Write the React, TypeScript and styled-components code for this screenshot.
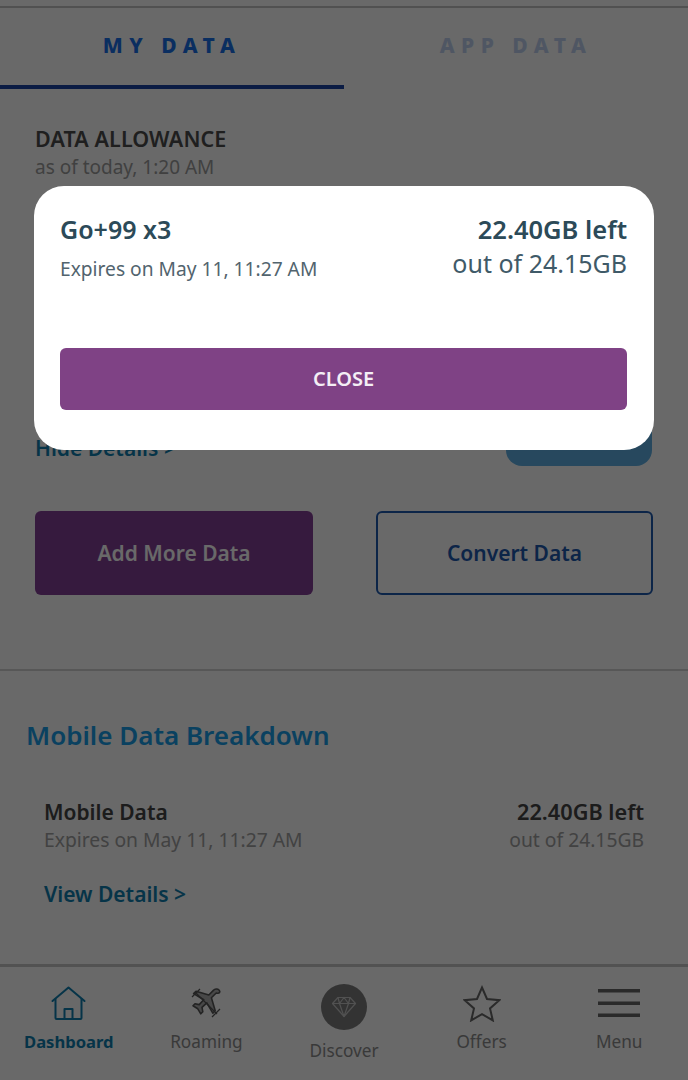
import React from 'react';
import styled, { createGlobalStyle } from 'styled-components';

const GlobalStyle = createGlobalStyle`
  html, body { margin: 0; padding: 0; background: #fff; }
  * { box-sizing: border-box; }
`;

const Page = styled.div`
  position: relative;
  width: 688px;
  height: 1080px;
  overflow: hidden;
  background: #fefefe;
  font-family: "Noto Sans", "Open Sans", sans-serif;
  display: flex;
  flex-direction: column;
`;

const TopLine = styled.div`
  margin-top: 6px;
  height: 2px;
  background: #c4c4c4;
`;

const Tabs = styled.div`
  display: flex;
  height: 81px;
`;

const Tab = styled.div<{ $active?: boolean }>`
  width: 344px;
  display: flex;
  align-items: center;
  justify-content: center;
  padding-bottom: 3px;
  font-size: 21px;
  font-weight: 800;
  letter-spacing: 6.5px;
  color: ${(p) => (p.$active ? '#1a70ea' : '#c0d2f0')};
  border-bottom: 4px solid ${(p) => (p.$active ? '#1b45a5' : 'transparent')};
`;

const Allowance = styled.section`
  padding: 36px 35px 0;
  height: 582px;
  border-bottom: 2px solid #d4d4d4;
  display: flex;
  flex-direction: column;
`;

const AllowanceTitle = styled.div`
  font-size: 21.5px;
  line-height: 28px;
  font-weight: 600;
  letter-spacing: 0.1px;
  color: #4c4c4c;
`;

const AsOf = styled.div`
  font-size: 19px;
  line-height: 28px;
  color: #9c9c9c;
`;

const DetailsRow = styled.div`
  margin-top: 248px;
  height: 37px;
  display: flex;
  justify-content: space-between;
  align-items: flex-end;
`;

const HideLink = styled.div`
  font-size: 21px;
  line-height: 36px;
  font-weight: 600;
  color: #0f7fb0;
`;

const Pill = styled.div`
  width: 146px;
  height: 37px;
  margin-right: 1px;
  border-radius: 0 0 16px 16px;
  background: #5fb0e4;
`;

const ActionRow = styled.div`
  margin-top: 45px;
  display: flex;
  justify-content: space-between;
`;

const Action = styled.div<{ $filled?: boolean }>`
  width: ${(p) => (p.$filled ? '278px' : '277px')};
  height: 84px;
  border-radius: 6px;
  display: flex;
  align-items: center;
  justify-content: center;
  font-size: 21px;
  font-weight: 600;
  background: ${(p) => (p.$filled ? '#833f97' : 'transparent')};
  color: ${(p) => (p.$filled ? '#fff' : '#1f5ab0')};
  border: ${(p) => (p.$filled ? 'none' : '2px solid #1f5ab0')};
`;

const Breakdown = styled.section`
  flex: 1;
  padding: 46px 44px 0 26px;
`;

const BreakdownTitle = styled.h2`
  margin: 0;
  font-size: 26px;
  line-height: 36px;
  font-weight: 600;
  color: #1a9fe8;
`;

const BreakdownRow = styled.div`
  margin-top: 45px;
  padding-left: 18px;
  display: flex;
  justify-content: space-between;
`;

const Stack = styled.div<{ $end?: boolean }>`
  display: flex;
  flex-direction: column;
  align-items: ${(p) => (p.$end ? 'flex-end' : 'flex-start')};
`;

const RowName = styled.div`
  font-size: 21px;
  line-height: 28px;
  font-weight: 600;
  color: #444;
`;

const RowAmount = styled(RowName)`
  font-size: 21.7px;
`;

const RowSub = styled.div`
  font-size: 19.3px;
  line-height: 28px;
  color: #a0a0a0;
`;

const ViewLink = styled.div`
  margin: 26px 0 0 18px;
  font-size: 21px;
  line-height: 28px;
  font-weight: 600;
  color: #0f7fb0;
`;

const Nav = styled.nav`
  height: 116px;
  border-top: 3px solid #c8c8c8;
  display: flex;
`;

const NavItem = styled.div<{ $active?: boolean }>`
  width: 137.6px;
  display: flex;
  flex-direction: column;
  align-items: center;
  padding-top: 13px;
  font-size: ${(p) => (p.$active ? '16.6px' : '17.2px')};
  line-height: 24px;
  font-weight: ${(p) => (p.$active ? 700 : 400)};
  color: ${(p) => (p.$active ? '#0f7fb0' : '#8c8c8c')};
`;

const IconSlot = styled.div<{ $tall?: boolean }>`
  height: ${(p) => (p.$tall ? '53px' : '46px')};
  margin-bottom: ${(p) => (p.$tall ? '6px' : '4px')};
  display: flex;
  align-items: center;
  justify-content: center;
`;

const DiamondBadge = styled.div`
  width: 46px;
  height: 46px;
  border-radius: 50%;
  background: #7c7c7c;
  display: flex;
  align-items: center;
  justify-content: center;
`;

const Scrim = styled.div`
  position: absolute;
  inset: 0;
  background: rgba(0, 0, 0, 0.59);
`;

const Modal = styled.div`
  position: absolute;
  left: 34px;
  top: 186px;
  width: 620px;
  height: 264px;
  padding: 26px 27px 0 26px;
  border-radius: 30px;
  background: #fff;
  display: flex;
  flex-direction: column;
`;

const ModalHead = styled.div`
  display: flex;
  justify-content: space-between;
  height: 136px;
`;

const PlanName = styled.div`
  font-size: 25px;
  line-height: 34px;
  font-weight: 600;
  color: #2c4a58;
`;

const PlanExpires = styled.div`
  margin-top: 9px;
  font-size: 19.2px;
  line-height: 28px;
  color: #52646e;
`;

const AmountLeft = styled.div`
  font-size: 25.5px;
  line-height: 34px;
  font-weight: 600;
  color: #2c4a58;
`;

const AmountTotal = styled.div`
  font-size: 25px;
  line-height: 34px;
  color: #3f5a68;
`;

const CloseButton = styled.button`
  width: 100%;
  height: 62px;
  padding: 0 0 2px;
  border: none;
  border-radius: 6px;
  background: #7f4285;
  color: #f4eef5;
  font: 600 20px "Noto Sans", "Open Sans", sans-serif;
`;

const House = () => (
  <svg width="35" height="34" viewBox="0 0 35 34" fill="none" stroke="#0f7fb0" strokeWidth="2" strokeLinejoin="round" strokeLinecap="round">
    <path d="M1.5 15 17.5 1.5 33.5 15" />
    <path d="M4.5 13v19a1 1 0 0 0 1 1h24a1 1 0 0 0 1-1V13" />
    <path d="M13.5 33V23h8v10" />
  </svg>
);

const Plane = () => (
  <svg width="32" height="32" viewBox="0 0 32 32" fill="#b0b0b0" stroke="#555" strokeWidth="1.6" strokeLinejoin="round">
    <path d="M29 3c-1.6-1.6-4.2-1-5.6.4l-4.6 4.6L6 4.2 3.6 6.6l10.2 6.2-4.6 4.8-4.2-.8-2 2 4.8 3 3 5 2-2-.8-4.4 4.8-4.6 6 10.4 2.4-2.4-3.8-13 4.8-4.8C29.8 7 30.6 4.6 29 3z" />
    <path d="M5 5l22 22M2 10l8-8M22 30l8-8" fill="none" strokeWidth="1.2" />
  </svg>
);

const Diamond = () => (
  <svg width="26" height="22" viewBox="0 0 26 22" fill="none" stroke="#c4c4c4" strokeWidth="1.2" strokeLinejoin="round">
    <path d="M7 1.5h12l5.5 6L13 20.5 1.5 7.5z" />
    <path d="M1.5 7.5h23M8.5 7.5l4.5 13 4.5-13M7 1.5l1.5 6 4.5-6 4.5 6 1.5-6" />
  </svg>
);

const Star = () => (
  <svg width="38" height="37" viewBox="0 0 38 37" fill="none" stroke="#666" strokeWidth="2" strokeLinejoin="miter">
    <path d="M19 2.5l5 11.5 12.3 1.2-9.3 8.2 2.8 12-10.8-6.3-10.8 6.3 2.8-12-9.3-8.2L14 14z" />
  </svg>
);

const Burger = () => (
  <svg width="42" height="28" viewBox="0 0 42 28" fill="#666">
    <rect y="0" width="42" height="3.5" />
    <rect y="12.5" width="42" height="3.5" />
    <rect y="24.5" width="42" height="3.5" />
  </svg>
);

export default function App() {
  return (
    <Page>
      <GlobalStyle />
      <TopLine />
      <Tabs>
        <Tab $active>MY DATA</Tab>
        <Tab>APP DATA</Tab>
      </Tabs>
      <Allowance>
        <AllowanceTitle>DATA ALLOWANCE</AllowanceTitle>
        <AsOf>as of today, 1:20 AM</AsOf>
        <DetailsRow>
          <HideLink>Hide Details &gt;</HideLink>
          <Pill />
        </DetailsRow>
        <ActionRow>
          <Action $filled>Add More Data</Action>
          <Action>Convert Data</Action>
        </ActionRow>
      </Allowance>
      <Breakdown>
        <BreakdownTitle>Mobile Data Breakdown</BreakdownTitle>
        <BreakdownRow>
          <Stack>
            <RowName>Mobile Data</RowName>
            <RowSub>Expires on May 11, 11:27 AM</RowSub>
          </Stack>
          <Stack $end>
            <RowAmount>22.40GB left</RowAmount>
            <RowSub>out of 24.15GB</RowSub>
          </Stack>
        </BreakdownRow>
        <ViewLink>View Details &gt;</ViewLink>
      </Breakdown>
      <Nav>
        <NavItem $active>
          <IconSlot><House /></IconSlot>
          Dashboard
        </NavItem>
        <NavItem>
          <IconSlot><Plane /></IconSlot>
          Roaming
        </NavItem>
        <NavItem>
          <IconSlot $tall><DiamondBadge><Diamond /></DiamondBadge></IconSlot>
          Discover
        </NavItem>
        <NavItem>
          <IconSlot><Star /></IconSlot>
          Offers
        </NavItem>
        <NavItem>
          <IconSlot><Burger /></IconSlot>
          Menu
        </NavItem>
      </Nav>
      <Scrim />
      <Modal>
        <ModalHead>
          <Stack>
            <PlanName>Go+99 x3</PlanName>
            <PlanExpires>Expires on May 11, 11:27 AM</PlanExpires>
          </Stack>
          <Stack $end>
            <AmountLeft>22.40GB left</AmountLeft>
            <AmountTotal>out of 24.15GB</AmountTotal>
          </Stack>
        </ModalHead>
        <CloseButton>CLOSE</CloseButton>
      </Modal>
    </Page>
  );
}
